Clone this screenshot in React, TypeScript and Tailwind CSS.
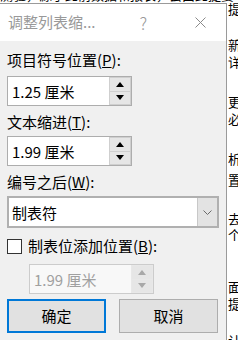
import type { ReactNode } from "react";

const font = "font-['Noto_Sans_CJK_SC','Noto_Sans',sans-serif]";

function Arrow({ up, color }: { up?: boolean; color: string }) {
  return (
    <svg width="8" height="5" viewBox="0 0 8 5">
      {up ? <path d="M0 5 L4 0 L8 5 Z" fill={color} /> : <path d="M0 0 L8 0 L4 5 Z" fill={color} />}
    </svg>
  );
}

function Spinner({ value, disabled }: { value: string; disabled?: boolean }) {
  const arrow = disabled ? "#a8a8a8" : "#000";
  return (
    <div
      className={
        "flex h-[30px] w-[125px] border " +
        (disabled ? "border-[#cccccc] bg-[#f8f8f8]" : "border-[#adadad] bg-white")
      }
    >
      <div
        className={
          "flex flex-1 items-center pl-[4px] text-[15px] leading-none " +
          (disabled ? "text-[#a0a0a0]" : "text-black")
        }
      >
        {value}
      </div>
      <div
        className={
          "flex w-[22px] flex-col gap-[1px] p-[1px] " + (disabled ? "bg-[#e8e8e8]" : "bg-[#cfcfcf]")
        }
      >
        <div className="flex flex-1 items-center justify-center bg-[#e6e6e6]">
          <Arrow up color={arrow} />
        </div>
        <div className="flex flex-1 items-center justify-center bg-[#e6e6e6]">
          <Arrow color={arrow} />
        </div>
      </div>
    </div>
  );
}

function Label({ children, className }: { children: ReactNode; className: string }) {
  return <div className={"h-[20px] text-[15px] leading-[20px] text-black " + className}>{children}</div>;
}

// text of the document peeking out to the right of the dialog
const docLines = [
  { top: "mt-[2px]", text: "提" },
  { top: "mt-[23px]", text: "新" },
  { top: "mt-[4px]", text: "详" },
  { top: "mt-[27px]", text: "更" },
  { top: "mt-[4px]", text: "必" },
  { top: "mt-[27px]", text: "析" },
  { top: "mt-[8px]", text: "置" },
  { top: "mt-[26px]", text: "去" },
  { top: "mt-[3px]", text: "个" },
  { top: "mt-[39px]", text: "面" },
  { top: "mt-[4px]", text: "提" },
  { top: "mt-[24px]", text: "计" },
];

export default function App() {
  return (
    <div className={"relative h-[340px] w-[238px] overflow-hidden bg-white " + font}>
      {/* document behind the dialog */}
      <div className="absolute left-0 top-[-13px] whitespace-nowrap text-[13px] leading-[15px] text-black">
        测验，源于此前数据和报表，会由此提要
      </div>
      <div className="absolute left-[228px] top-0 flex w-[10px] flex-col overflow-hidden text-[13px] text-black">
        {docLines.map((l, i) => (
          <div key={i} className={"h-[13px] whitespace-nowrap leading-[13px] " + l.top}>
            {l.text}
          </div>
        ))}
      </div>

      {/* dialog */}
      <div className="absolute left-0 top-[3px] flex h-[337px] w-[227px] flex-col border-r border-t border-[#9a9a9a] bg-[#f0f0f0]">
        <div className="flex h-[37px] items-center bg-white text-[15px] text-[#999999]">
          <span className="ml-[8px]">调整列表缩...</span>
          <span className="ml-[44px] text-[17px] font-light">?</span>
          <svg className="ml-[48px]" width="11" height="11" viewBox="0 0 11 11">
            <path d="M0.5 0.5 L10.5 10.5 M10.5 0.5 L0.5 10.5" stroke="#8a8a8a" strokeWidth="1" />
          </svg>
        </div>

        <div className="flex flex-col pl-[7px]">
          <Label className="mt-[9px]">
            项目符号位置(<span className="underline">P</span>):
          </Label>
          <div className="mt-[6px]">
            <Spinner value="1.25 厘米" />
          </div>

          <Label className="mt-[6px]">
            文本缩进(<span className="underline">T</span>):
          </Label>
          <div className="mt-[4px]">
            <Spinner value="1.99 厘米" />
          </div>

          <Label className="mt-[6px]">
            编号之后(<span className="underline">W</span>):
          </Label>
          <div className="mt-[4px] flex h-[32px] w-[212px] border-2 border-[#b0b0b0] bg-white">
            <div className="flex flex-1 items-center pl-[3px] text-[15px] leading-none text-black">制表符</div>
            <div className="flex w-[20px] items-center justify-center border-l border-[#c8c8c8] bg-[#e3e3e3]">
              <svg width="9" height="5" viewBox="0 0 9 5">
                <path d="M0.5 0.5 L4.5 4.5 L8.5 0.5" stroke="#6a6a6a" strokeWidth="1" fill="none" />
              </svg>
            </div>
          </div>

          <div className="mt-[8px] flex h-[20px] items-center">
            <div className="h-[15px] w-[15px] border border-[#333333] bg-white" />
            <span className="ml-[6px] text-[15px] leading-[20px] text-black">
              制表位添加位置(<span className="underline">B</span>):
            </span>
          </div>

          <div className="ml-[22px] mt-[8px]">
            <Spinner value="1.99 厘米" disabled />
          </div>

          <div className="mt-[5px] flex gap-[13px]">
            <button className="flex h-[34px] w-[99px] items-center justify-center border-2 border-[#0078d7] bg-[#e1e1e1] text-[15px] text-black">
              确定
            </button>
            <button className="flex h-[34px] w-[99px] items-center justify-center border border-[#adadad] bg-[#e1e1e1] text-[15px] text-black">
              取消
            </button>
          </div>
        </div>
      </div>
    </div>
  );
}
